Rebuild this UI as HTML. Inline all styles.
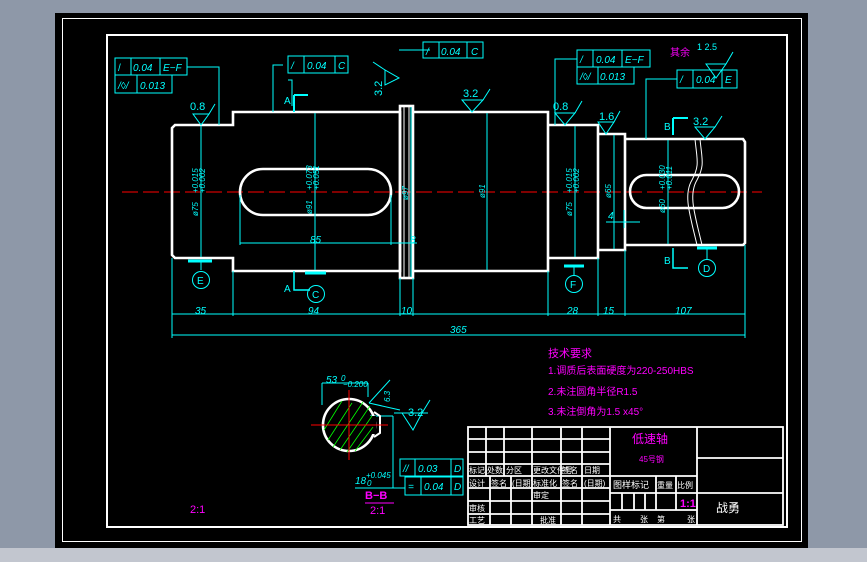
<!DOCTYPE html>
<html><head><meta charset="utf-8"><style>
html,body{margin:0;padding:0;width:867px;height:562px;overflow:hidden;background:#8e98a8}
svg{display:block}
text{font-family:"Liberation Sans","Noto Sans CJK SC",sans-serif}
</style></head><body>
<svg width="867" height="562" viewBox="0 0 867 562" xmlns="http://www.w3.org/2000/svg">
<rect x="0" y="0" width="867" height="562" fill="#8e98a8"/>
<rect x="0" y="548" width="867" height="14" fill="#c2c6cf"/>
<rect x="55" y="13" width="753" height="535" fill="#000"/>
<rect x="62.5" y="18.5" width="739" height="523" fill="none" stroke="#fff" stroke-width="1"/>
<rect x="107" y="35" width="680" height="492" fill="none" stroke="#fff" stroke-width="2"/>

<line x1="122" y1="192" x2="762" y2="192" stroke="#f00" stroke-width="1" stroke-dasharray="16,5"/>

<g fill="none" stroke="#fff" stroke-width="2.6">
<path d="M175,125 L233,125 L233,112 L400,112 L400,271 L233,271 L233,258 L175,258 L172,255 L172,128 Z"/>
<rect x="400" y="106" width="13" height="172"/>
<line x1="404" y1="107" x2="404" y2="277" stroke-width="1"/>
<line x1="409" y1="107" x2="409" y2="277" stroke-width="1"/>
<path d="M413,112 L548,112 L548,271 L413,271"/>
<path d="M548,125 L598,125 L598,258 L548,258"/>
<path d="M598,134 L625,134 L625,250 L598,250"/>
<path d="M625,139 L743,139 L745,142 L745,243 L743,245 L625,245"/>
<rect x="240" y="169" width="151" height="46" rx="23"/>
<rect x="630" y="175" width="109" height="33" rx="16.5"/>
</g>
<g fill="none" stroke="#fff" stroke-width="1">
<path d="M695,139 C697,160 700,165 692,180 C683,195 690,215 697,245"/>
<path d="M700,139 C702,160 705,165 697,180 C688,195 695,215 702,245"/>
</g>

<g stroke="#0ff" stroke-width="1" fill="none">
<line x1="201" y1="126" x2="201" y2="257"/>
<line x1="315" y1="113" x2="315" y2="270"/>
<line x1="411" y1="107" x2="411" y2="277"/>
<line x1="487" y1="113" x2="487" y2="270"/>
<line x1="575" y1="126" x2="575" y2="257"/>
<line x1="614" y1="135" x2="614" y2="249"/>
<line x1="668" y1="140" x2="668" y2="244"/>
<line x1="240" y1="243" x2="417" y2="243"/>
<line x1="240" y1="195" x2="240" y2="245"/>
<line x1="391" y1="195" x2="391" y2="245"/>
<line x1="606" y1="222" x2="640" y2="222"/>
<line x1="624" y1="210" x2="624" y2="228"/>
<line x1="172" y1="258" x2="172" y2="338"/>
<line x1="233" y1="271" x2="233" y2="316"/>
<line x1="400" y1="278" x2="400" y2="316"/>
<line x1="413" y1="278" x2="413" y2="316"/>
<line x1="548" y1="271" x2="548" y2="316"/>
<line x1="598" y1="258" x2="598" y2="316"/>
<line x1="625" y1="250" x2="625" y2="316"/>
<line x1="745" y1="245" x2="745" y2="338"/>
<line x1="172" y1="314" x2="745" y2="314"/>
<line x1="172" y1="335" x2="745" y2="335"/>
<path d="M187,67 L219,67 L219,125"/>
<path d="M283,65 L273,65 L273,112"/>
<path d="M577,59 L555,59 L555,125"/>
<path d="M677,79 L646,79 L646,139"/>
<path d="M288,80 L292,80 L292,106"/>
<path d="M399,50 L430,50"/>
<path d="M294,95 L294,112 M294,95 L308,95" stroke-width="2"/>
<path d="M294,271 L294,290 L310,290" stroke-width="1.5"/>
<path d="M673,118 L673,135 M673,118 L688,118" stroke-width="2"/>
<path d="M673,248 L673,268 L688,268" stroke-width="1.5"/>
<line x1="188" y1="261" x2="212" y2="261" stroke-width="3"/>
<line x1="305" y1="273" x2="326" y2="273" stroke-width="3"/>
<line x1="564" y1="266" x2="584" y2="266" stroke-width="3"/>
<line x1="697" y1="248" x2="717" y2="248" stroke-width="3"/>
<line x1="201" y1="261" x2="201" y2="270"/>
<line x1="574" y1="266" x2="574" y2="276"/>
<circle cx="201" cy="280" r="8.5"/>
<circle cx="316" cy="294" r="8.5"/>
<circle cx="574" cy="284" r="8.5"/>
<circle cx="707" cy="268" r="8.5"/>
<line x1="707" y1="248" x2="707" y2="259"/>
<path d="M193,114 L209,114 L201,125 Z M209,114 L215,104"/>
<path d="M462,100 L483,100 L472,112 Z M483,100 L490,89"/>
<path d="M555,113 L575,113 L565,125 Z M575,113 L582,101"/>
<path d="M598,122 L614,122 L606,134 Z M614,122 L620,111"/>
<path d="M695,127 L715,127 L705,139 Z M715,127 L722,116"/>
<path d="M706,64 L726,64 L716,78 Z M726,64 L733,52"/>
<path d="M385,85 L385,70 L399,78 Z M385,70 L373,62"/>
<rect x="115" y="58" width="72" height="17"/><line x1="131" y1="58" x2="131" y2="75"/><line x1="160" y1="58" x2="160" y2="75"/>
<rect x="115" y="75" width="57" height="18"/><line x1="137" y1="75" x2="137" y2="93"/>
<rect x="288" y="56" width="60" height="17"/><line x1="304" y1="56" x2="304" y2="73"/><line x1="335" y1="56" x2="335" y2="73"/>
<rect x="423" y="42" width="60" height="16"/><line x1="439" y1="42" x2="439" y2="58"/><line x1="467" y1="42" x2="467" y2="58"/>
<rect x="577" y="50" width="73" height="17"/><line x1="593" y1="50" x2="593" y2="67"/><line x1="622" y1="50" x2="622" y2="67"/>
<rect x="577" y="67" width="57" height="17"/><line x1="598" y1="67" x2="598" y2="84"/>
<rect x="677" y="70" width="60" height="18"/><line x1="693" y1="70" x2="693" y2="88"/><line x1="722" y1="70" x2="722" y2="88"/>
<rect x="400" y="459" width="63" height="17"/><line x1="415" y1="459" x2="415" y2="476"/><line x1="451" y1="459" x2="451" y2="476"/>
<rect x="405" y="477" width="58" height="18"/><line x1="421" y1="477" x2="421" y2="495"/><line x1="451" y1="477" x2="451" y2="495"/>
<path d="M322,383 L368,383 M322,383 L322,405 M368,383 L368,397"/>
<path d="M369,403 L390,380 M369,403 L400,410"/>
<path d="M394,413 L428,413 M402,413 L413,430 L422,413 M422,413 L430,400"/>
<path d="M393,416 L393,488 L405,488"/>
<path d="M355,488 L393,488"/>
<path d="M370,416 L393,416"/>
</g>
<circle cx="349" cy="425" r="26" fill="none" stroke="#fff" stroke-width="2.6"/>
<rect x="368" y="416" width="8" height="18" fill="#000"/>
<path d="M374,412 L380,416 L380,433 L374,437" fill="none" stroke="#fff" stroke-width="2"/>
<g stroke="#0f0" stroke-width="0.8">
<line x1="328" y1="440" x2="352" y2="403"/><line x1="333" y1="447" x2="363" y2="402"/><line x1="340" y1="450" x2="370" y2="406"/><line x1="347" y1="452" x2="372" y2="416"/><line x1="355" y1="451" x2="373" y2="427"/><line x1="324" y1="430" x2="342" y2="401"/>
</g>
<g stroke="#f00" stroke-width="1"><line x1="311" y1="425" x2="388" y2="425"/><line x1="349" y1="390" x2="349" y2="460"/></g>

<g fill="#0ff" font-size="10" font-style="italic">
<text x="133" y="71">0.04</text><text x="163" y="71">E−F</text><text x="118" y="71" font-style="normal">/</text>
<text x="140" y="89">0.013</text><text x="118" y="89">/◊/</text>
<text x="307" y="69">0.04</text><text x="338" y="69">C</text><text x="291" y="69">/</text>
<text x="441" y="55">0.04</text><text x="471" y="55">C</text><text x="426" y="55">/</text>
<text x="596" y="63">0.04</text><text x="625" y="63">E−F</text><text x="580" y="63">/</text>
<text x="600" y="80">0.013</text><text x="580" y="80">/◊/</text>
<text x="696" y="83">0.04</text><text x="725" y="83">E</text><text x="680" y="83">/</text>
<text x="418" y="472">0.03</text><text x="454" y="472">D</text><text x="403" y="472">//</text>
<text x="424" y="490">0.04</text><text x="454" y="490">D</text><text x="408" y="490">=</text>
<text x="195" y="314">35</text><text x="308" y="314">94</text><text x="401" y="314">10</text>
<text x="567" y="314">28</text><text x="603" y="314">15</text><text x="675" y="314">107</text>
<text x="450" y="333">365</text><text x="310" y="243">85</text><text x="410" y="243">8</text><text x="608" y="219">4</text>
<text x="326" y="383">53</text><text x="355" y="484">18</text>
</g>
<g fill="#0ff" font-size="8" font-style="italic">
<text transform="translate(198,216) rotate(-90)">ø75</text><text transform="translate(198,193) rotate(-90)">+0.015</text><text transform="translate(205,193) rotate(-90)">+0.002</text>
<text transform="translate(312,214) rotate(-90)">ø91</text><text transform="translate(312,190) rotate(-90)">+0.073</text><text transform="translate(319,190) rotate(-90)">+0.051</text>
<text transform="translate(408,200) rotate(-90)">ø97</text>
<text transform="translate(485,198) rotate(-90)">ø91</text>
<text transform="translate(572,216) rotate(-90)">ø75</text><text transform="translate(572,193) rotate(-90)">+0.015</text><text transform="translate(579,193) rotate(-90)">+0.002</text>
<text transform="translate(611,198) rotate(-90)">ø65</text>
<text transform="translate(665,213) rotate(-90)">ø60</text><text transform="translate(665,190) rotate(-90)">+0.030</text><text transform="translate(672,190) rotate(-90)">+0.011</text>
<text x="341" y="381">0</text><text x="343" y="387">−0.200</text>
<text x="366" y="478">+0.045</text><text x="367" y="486">0</text>
<text transform="translate(390,402) rotate(-90)">6.3</text>
</g>
<g fill="#0ff" font-size="11">
<text x="190" y="110">0.8</text><text x="463" y="97">3.2</text><text x="553" y="110">0.8</text>
<text x="599" y="120">1.6</text><text x="693" y="125">3.2</text><text x="408" y="416">3.2</text>
<text x="697" y="50" font-size="9">1 2.5</text>
<text transform="translate(382,96) rotate(-90)">3.2</text>
<text x="284" y="104" font-size="10">A</text><text x="284" y="292" font-size="10">A</text>
<text x="664" y="130" font-size="10">B</text><text x="664" y="264" font-size="10">B</text>
<text x="197" y="284" font-size="10">E</text><text x="312" y="298" font-size="10">C</text>
<text x="570" y="288" font-size="10">F</text><text x="703" y="272" font-size="10">D</text>
</g>

<g fill="#f0f" font-size="10">
<text x="548" y="357" font-size="11">技术要求</text>
<text x="548" y="374">1.调质后表面硬度为220-250HBS</text>
<text x="548" y="395">2.未注圆角半径R1.5</text>
<text x="548" y="415">3.未注倒角为1.5 x45°</text>
<text x="670" y="56" font-size="10">其余</text>
<text x="365" y="499" font-size="11" font-weight="bold">B−B</text>
<text x="370" y="514" font-size="11">2:1</text>
<text x="190" y="513" font-size="11">2:1</text>
<text x="632" y="443" font-size="12">低速轴</text>
<text x="639" y="462" font-size="8">45号钢</text>
<text x="680" y="507" font-size="11" font-weight="bold">1:1</text>
</g>
<line x1="365" y1="503" x2="394" y2="503" stroke="#f0f" stroke-width="1"/>

<g stroke="#fff" stroke-width="1.8" fill="none">
<rect x="468" y="427" width="315" height="98"/>
<line x1="468" y1="439" x2="610" y2="439"/><line x1="468" y1="452" x2="610" y2="452"/><line x1="468" y1="464" x2="610" y2="464"/>
<line x1="468" y1="476" x2="697" y2="476"/><line x1="468" y1="488" x2="610" y2="488"/><line x1="468" y1="501" x2="610" y2="501"/><line x1="468" y1="514" x2="610" y2="514"/>
<line x1="486" y1="427" x2="486" y2="476"/><line x1="504" y1="427" x2="504" y2="476"/><line x1="532" y1="427" x2="532" y2="525"/><line x1="561" y1="427" x2="561" y2="525"/><line x1="582" y1="427" x2="582" y2="525"/>
<line x1="490" y1="476" x2="490" y2="525"/><line x1="511" y1="476" x2="511" y2="525"/>
<line x1="610" y1="427" x2="610" y2="525"/><line x1="697" y1="427" x2="697" y2="525"/>
<line x1="697" y1="458" x2="783" y2="458"/><line x1="697" y1="493" x2="783" y2="493"/>
<line x1="610" y1="493" x2="697" y2="493"/><line x1="610" y1="510" x2="697" y2="510"/>
<line x1="656" y1="476" x2="656" y2="510"/><line x1="676" y1="476" x2="676" y2="510"/>
<line x1="622" y1="493" x2="622" y2="510"/><line x1="634" y1="493" x2="634" y2="510"/><line x1="645" y1="493" x2="645" y2="510"/>
</g>
<g fill="#fff" font-size="8">
<text x="469" y="473">标记</text><text x="487" y="473">处数</text><text x="506" y="473">分区</text><text x="533" y="473">更改文件号</text><text x="562" y="473">签名</text><text x="584" y="473">日期</text>
<text x="469" y="486">设计</text><text x="491" y="486">签名</text><text x="512" y="486">(日期)</text><text x="533" y="486">标准化</text><text x="562" y="486">签名</text><text x="584" y="486">(日期)</text>
<text x="533" y="498">审定</text><text x="469" y="511">审核</text><text x="469" y="523">工艺</text><text x="540" y="523">批准</text>
<text x="613" y="488" font-size="9">图样标记</text><text x="657" y="488">重量</text><text x="677" y="488">比例</text>
<text x="613" y="522">共</text><text x="640" y="522">张</text><text x="657" y="522">第</text><text x="687" y="522">张</text>
<text x="716" y="512" font-size="12">战勇</text>
</g>
</svg>
</body></html>
